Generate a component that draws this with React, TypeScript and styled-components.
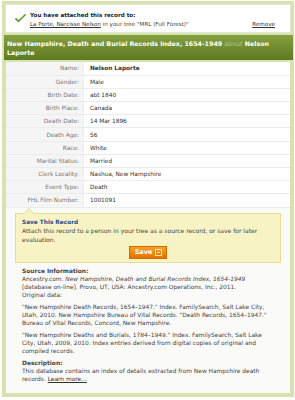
import React from "react";
import styled, { createGlobalStyle } from "styled-components";

const GlobalStyle = createGlobalStyle`
  html, body {
    margin: 0;
    padding: 0;
    background: #ffffff;
  }
  body {
    font-family: "DejaVu Sans", Verdana, sans-serif;
    font-size: 5.5px;
    color: #333333;
  }
`;

const rows: [string, string][] = [
  ["Name:", "Nelson Laporte"],
  ["Gender:", "Male"],
  ["Birth Date:", "abt 1840"],
  ["Birth Place:", "Canada"],
  ["Death Date:", "14 Mar 1896"],
  ["Death Age:", "56"],
  ["Race:", "White"],
  ["Marital Status:", "Married"],
  ["Clerk Locality:", "Nashua, New Hampshire"],
  ["Event Type:", "Death"],
  ["FHL Film Number:", "1001091"],
];

const App = () => {
  return (
    <>
      <GlobalStyle />
      <Frame>
        <Notice>
          <CheckMark viewBox="0 0 16 12">
            <path d="M1 6.5 L5.5 11 L15 1.5 L13.5 0.5 L5.5 8 L2.5 5 Z" fill="#5a9a2a" />
          </CheckMark>
          <NoticeText>
            <strong>You have attached this record to:</strong>
            <NoticeLine>
              <span>
                <UnderLink>La Porte, Narcisse Nelson</UnderLink> in your tree "MRL (Full Forest)"
              </span>
              <UnderLink>Remove</UnderLink>
            </NoticeLine>
          </NoticeText>
        </Notice>
        <Header>
          New Hampshire, Death and Burial Records Index, 1654-1949 <About>about</About> Nelson
          Laporte
        </Header>
        <Card>
          <Table>
            <tbody>
              {rows.map(([label, value], i) => (
                <tr key={label}>
                  <Label>{label}</Label>
                  <Value $bold={i === 0}>{value}</Value>
                </tr>
              ))}
            </tbody>
          </Table>
          <SaveBox>
            <SaveTitle>Save This Record</SaveTitle>
            <p>
              Attach this record to a person in your tree as a source record, or save for later
              evaluation.
            </p>
            <SaveRow>
              <SaveButton>
                Save <ButtonIcon />
              </SaveButton>
            </SaveRow>
          </SaveBox>
          <Source>
            <Heading>Source Information:</Heading>
            <p>
              Ancestry.com. <em>New Hampshire, Death and Burial Records Index, 1654-1949</em>{" "}
              [database on-line]. Provo, UT, USA: Ancestry.com Operations, Inc., 2011.
              <br />
              Original data:
            </p>
            <p>
              "New Hampshire Death Records, 1654–1947." Index. FamilySearch, Salt Lake City,
              Utah, 2010. New Hampshire Bureau of Vital Records. "Death Records, 1654–1947."
              Bureau of Vital Records, Concord, New Hampshire.
            </p>
            <p>
              "New Hampshire Deaths and Burials, 1784–1949." Index. FamilySearch, Salt Lake
              City, Utah, 2009, 2010. Index entries derived from digital copies of original and
              compiled records.
            </p>
            <Heading>Description:</Heading>
            <p>
              This database contains an index of details extracted from New Hampshire death
              records. <UnderLink>Learn more...</UnderLink>
            </p>
          </Source>
        </Card>
      </Frame>
    </>
  );
};

export default App;

const Frame = styled.div`
  margin: 1px 1px 0 2px;
  padding: 3px 3px 4px 3px;
  background: #d8e2b0;
  display: flex;
  flex-direction: column;
  gap: 2px;
`;

const Notice = styled.div`
  background: #ffffff;
  border: 1px solid #e4ead0;
  display: flex;
  align-items: flex-start;
  gap: 3px;
  padding: 5px 15px 5px 8px;
  height: 17px;
`;

const CheckMark = styled.svg`
  width: 13px;
  height: 11px;
  margin-top: 3px;
  flex-shrink: 0;
`;

const NoticeText = styled.div`
  flex: 1;
  display: flex;
  flex-direction: column;
  gap: 3px;
  font-size: 5.6px;
  color: #222222;
  strong {
    margin-top: 2px;
  }
`;

const NoticeLine = styled.div`
  display: flex;
  justify-content: space-between;
  color: #444444;
`;

const UnderLink = styled.span`
  text-decoration: underline;
  color: #333333;
`;

const Header = styled.div`
  background: linear-gradient(#84a03e, #5e7a20);
  color: #ffffff;
  font-weight: bold;
  font-size: 6.3px;
  line-height: 9px;
  padding: 4px 3px 3px 3px;
  margin: 0 -2px 0 -1px;
`;

const About = styled.span`
  color: #b7c98a;
  font-weight: normal;
`;

const Card = styled.div`
  background: #fafaf8;
  margin: 0 1px 0 1px;
  padding-bottom: 6px;
`;

const Table = styled.table`
  width: 100%;
  border-collapse: collapse;
  background: #ffffff;
  tr {
    height: 13.2px;
  }
  td {
    border-bottom: 1px solid #ececec;
    padding: 0;
    font-size: 5.8px;
  }
`;

const Label = styled.td`
  width: 73px;
  text-align: right;
  padding-right: 4px !important;
  color: #777777;
  background: #f5f5f5;
  border-right: 1px solid #ececec;
`;

const Value = styled.td<{ $bold?: boolean }>`
  padding-left: 6px !important;
  color: #333333;
  font-weight: ${(p) => (p.$bold ? "bold" : "normal")};
`;

const SaveBox = styled.div`
  position: relative;
  margin: 5px 9px 0 9px;
  background: #f7f3c5;
  border: 1px solid #e8dc8e;
  padding: 5px 6px 3px 6px;
  p {
    margin: 1px 0 0 0;
    line-height: 9.5px;
    font-size: 6px;
    color: #444444;
  }
  &::before {
    content: "";
    position: absolute;
    left: 7px;
    top: -6px;
    width: 0;
    height: 0;
    border-left: 6px solid transparent;
    border-right: 6px solid transparent;
    border-bottom: 6px solid #e8dc8e;
  }
  &::after {
    content: "";
    position: absolute;
    left: 8px;
    top: -5px;
    width: 0;
    height: 0;
    border-left: 5px solid transparent;
    border-right: 5px solid transparent;
    border-bottom: 5px solid #f7f3c5;
  }
`;

const SaveTitle = styled.div`
  color: #1d4f8f;
  font-weight: bold;
  font-size: 5.8px;
`;

const SaveRow = styled.div`
  display: flex;
  justify-content: center;
  margin-top: 1px;
`;

const SaveButton = styled.div`
  display: flex;
  align-items: center;
  gap: 3px;
  background: linear-gradient(#f7a021, #e17400);
  border: 1px solid #d06a00;
  color: #ffffff;
  font-weight: bold;
  font-size: 6.5px;
  padding: 1px 4px 1px 5px;
  height: 9px;
`;

const ButtonIcon = styled.span`
  display: inline-block;
  width: 5px;
  height: 5px;
  border: 1px solid #ffe0b0;
  position: relative;
  &::after {
    content: "";
    position: absolute;
    left: 1px;
    right: 1px;
    top: 2px;
    height: 1px;
    background: #ffe0b0;
  }
`;

const Source = styled.div`
  padding: 4px 16px 0 16px;
  color: #444444;
  font-size: 5.9px;
  line-height: 8px;
  p {
    margin: 0 0 4px 0;
  }
`;

const Heading = styled.div`
  font-weight: bold;
  color: #444444;
`;
